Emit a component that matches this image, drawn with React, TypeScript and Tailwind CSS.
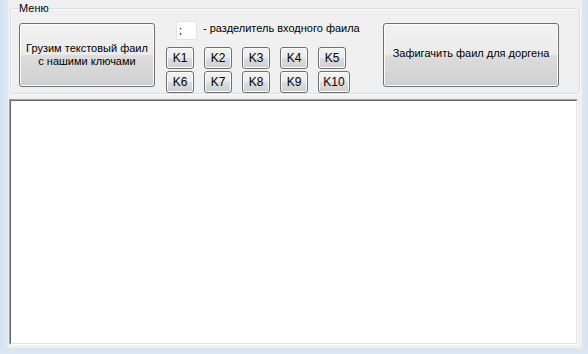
import React from 'react'

const font = { fontFamily: '"Liberation Sans", Arial, sans-serif' }

function WinButton({ className, children }: { className: string; children: React.ReactNode }) {
  return (
    <button
      className={`flex items-center justify-center rounded-[3px] border border-[#707070] bg-[linear-gradient(#f2f2f2_0%,#ebebeb_50%,#dddddd_50%,#cfcfcf_100%)] text-[11px] leading-[13px] text-black shadow-[inset_0_0_0_1px_#fcfcfc] ${className}`}
    >
      {children}
    </button>
  )
}

const keysTop = ['K1', 'K2', 'K3', 'K4', 'K5']
const keysBottom = ['K6', 'K7', 'K8', 'K9', 'K10']

export default function App() {
  return (
    <div className="flex h-[354px] w-[588px] flex-col bg-[#dbe6f3]" style={font}>
      <div className="flex h-[348px]">
        <div className="w-[8px] bg-[linear-gradient(90deg,#d3e0f0,#dfe9f5)]" />
        <main className="flex w-[574px] flex-col bg-[#f0f0f0] pt-[2px]">
          <fieldset className="ml-[2px] h-[92px] w-[570px] rounded-[3px] border border-[#d5dfe5] pl-[8px] shadow-[inset_1px_1px_0_#ffffff,1px_1px_0_#ffffff]">
            <legend className="ml-[-1px] px-[1px] text-[11px] leading-[13px] text-black">Меню</legend>
            <div className="flex items-start">
              <WinButton className="mt-[8px] h-[64px] w-[136px] flex-col">
                <span>Грузим текстовый фаил</span>
                <span>с нашими ключами</span>
              </WinButton>

              <div className="ml-[11px] mt-[6px] flex w-[184px] flex-col">
                <div className="flex items-center">
                  <div className="ml-[10px] h-[19px] w-[21px] shrink-0 border border-[#e2e3ea] bg-white pl-[2px] text-[11px] leading-[17px]">
                    ;
                  </div>
                  <span className="-mt-[4px] ml-[6px] whitespace-nowrap text-[11px] leading-[13px] text-black">
                    - разделитель входного фаила
                  </span>
                </div>
                <div className="mt-[7px] flex gap-[10px]">
                  {keysTop.map((k) => (
                    <WinButton key={k} className="h-[22px] w-[28px] text-[12px]">
                      {k}
                    </WinButton>
                  ))}
                </div>
                <div className="mt-[2px] flex gap-[10px]">
                  {keysBottom.map((k) => (
                    <WinButton key={k} className={`h-[22px] text-[12px] ${k === 'K10' ? 'w-[32px]' : 'w-[28px]'}`}>
                      {k}
                    </WinButton>
                  ))}
                </div>
              </div>

              <WinButton className="ml-[33px] mt-[8px] h-[64px] w-[176px] pb-[3px]">Зафигачить фаил для доргена</WinButton>
            </div>
          </fieldset>

          <div className="ml-[1px] mt-[5px] h-[246px] w-[569px] border-b border-l border-r border-t border-b-white border-l-[#a0a0a0] border-r-white border-t-[#a0a0a0]">
            <div className="h-full w-full border border-b-[#e3e3e3] border-l-[#696969] border-r-[#e3e3e3] border-t-[#696969] bg-white" />
          </div>
        </main>
        <div className="w-[6px] bg-[linear-gradient(90deg,#dfe9f5,#d3e0f0)]" />
      </div>
      <div className="h-[6px] bg-[#dbe6f3]" />
    </div>
  )
}
